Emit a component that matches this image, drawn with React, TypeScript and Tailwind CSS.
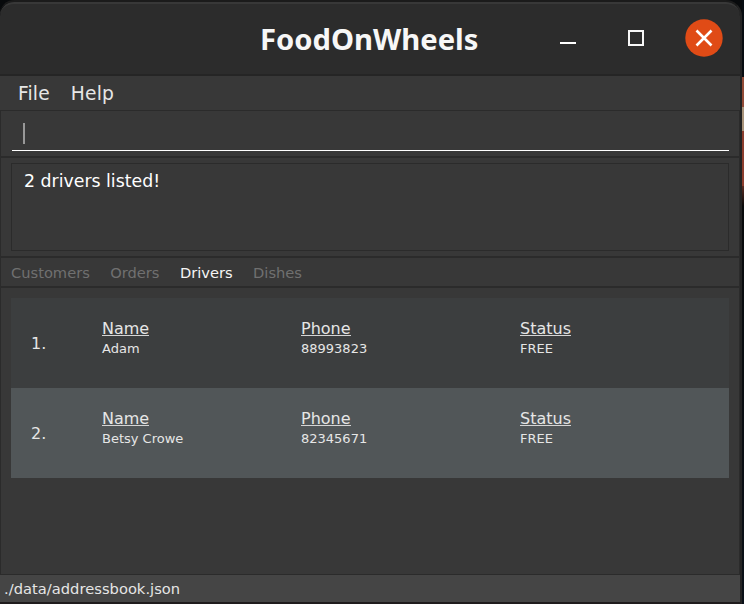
const tabs = ["Customers", "Orders", "Drivers", "Dishes"];

const drivers = [
  { id: 1, name: "Adam", phone: "88993823", status: "FREE", bg: "bg-[#3c3e3f]" },
  { id: 2, name: "Betsy Crowe", phone: "82345671", status: "FREE", bg: "bg-[#515658]" },
];

function Field({ label, value, className }: { label: string; value: string; className: string }) {
  return (
    <div className={`flex flex-col ${className}`}>
      <div className="flex h-5 items-start">
        <span className="h-[17px] border-b border-[#d5d5d5] text-[16px] leading-[19px]">{label}</span>
      </div>
      <span className="text-[13px] leading-5">{value}</span>
    </div>
  );
}

function TitleBar() {
  return (
    <header className="flex h-[74px] shrink-0 items-center rounded-t-[14px] border-t-2 border-b-2 border-t-[#383838] border-b-[#252525] bg-[#2c2c2c]">
      <div className="w-[260px]" />
      <h1 className="w-[288px] whitespace-nowrap font-['Noto_Sans'] text-[29.2px] leading-[40px] font-bold text-[#f7f7f7]">
        FoodOnWheels
      </h1>
      <svg width="190" height="70" viewBox="0 0 190 70" fill="none">
        <path d="M12 39H28" stroke="#fff" strokeWidth="2" />
        <rect x="81" y="27" width="14" height="14" stroke="#f7f7f7" strokeWidth="2" />
        <circle cx="156" cy="34" r="18.7" fill="#e04b16" />
        <path d="M148.5 26.5L163.5 41.5M163.5 26.5L148.5 41.5" stroke="#fff" strokeWidth="2.6" />
      </svg>
    </header>
  );
}

export default function App() {
  return (
    <div className="flex h-[604px] w-[744px] overflow-hidden bg-[#080a0c] font-['DejaVu_Sans',sans-serif] text-[#e6e6e6]">
      <div className="flex w-[742px] flex-col border-t-2 border-r-2 border-b-2 border-t-[#1b1b1b] border-r-[#242424] border-b-[#1f1c1d] rounded-tr-[16px] rounded-tl-[14px]">
        <TitleBar />
        <nav className="flex h-[34px] shrink-0 items-center gap-[21px] bg-[#383838] pt-0.5 pl-[18px] text-[18.67px] tracking-[0.15px]">
          <span>File</span>
          <span>Help</span>
        </nav>
        <main className="flex h-[465px] shrink-0 flex-col border-t border-x border-[#2b2b2b] bg-[#383838]">
          <div className="h-[47px] shrink-0 border-b-2 border-[#2b2b2b] pr-2.5 pl-[11px]">
            <div className="flex h-10 items-center border-b border-white pt-1.5 pl-[11px]">
              <div className="h-[21px] w-0.5 bg-[#989898]" />
            </div>
          </div>
          <div className="h-[100px] shrink-0 border-b-2 border-[#2b2b2b] px-2.5 pt-[5px]">
            <div className="h-[88px] border border-[#2b2b2b] px-3 pt-[7px] text-[17.33px] leading-5 text-white">
              2 drivers listed!
            </div>
          </div>
          <div className="flex h-[30px] shrink-0 items-center border-b-2 border-[#2b2b2b] pt-0.5 pl-2.5 text-[14.67px]">
            <div className="flex gap-[20.4px]">
              {tabs.map((tab) => (
                <span key={tab} className={tab === "Drivers" ? "text-[#f5f5f5]" : "text-[#707070]"}>
                  {tab}
                </span>
              ))}
            </div>
          </div>
          <div className="flex flex-1 flex-col border-b border-[#2b2b2b] px-2.5 pt-2.5">
            {drivers.map((d) => (
              <section key={d.id} className={`flex h-[90px] pt-[21px] pl-5 ${d.bg}`}>
                <span className="w-[71px] pt-[15px] text-[16px] leading-5">{d.id}.</span>
                <Field label="Name" value={d.name} className="w-[199px]" />
                <Field label="Phone" value={d.phone} className="w-[219px]" />
                <Field label="Status" value={d.status} className="flex-1" />
              </section>
            ))}
          </div>
        </main>
        <footer className="flex flex-1 items-center bg-[#454545] pt-px pl-1 text-[14.67px] tracking-[0.03px]">
          ./data/addressbook.json
        </footer>
      </div>
      <div className="flex w-0.5 flex-col">
        <div className="h-[77px] bg-[#070c11]" />
        <div className="h-[30px] bg-[#914a36]" />
        <div className="h-[24px] bg-[#a8937a]" />
        <div className="h-[55px] bg-[#8b3d2d]" />
        <div className="h-[20px] bg-linear-to-b from-[#5c2c22] to-[#0b0a0a]" />
        <div className="flex-1 bg-linear-to-b from-[#090b0c] to-[#0a1018]" />
      </div>
    </div>
  );
}
